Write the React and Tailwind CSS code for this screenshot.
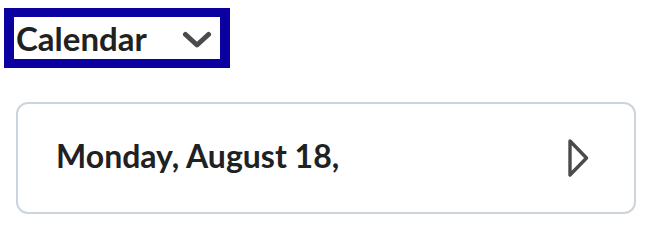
export default function App() {
  return (
    <div className="min-h-[230px] bg-white pl-1 pt-2 font-['Lato',sans-serif]">
      <button
        type="button"
        className="flex w-[226px] h-[60px] items-center justify-between border-x-[10px] border-y-[9px] border-[#0b00a0] bg-white pl-[2px] pr-[8px]"
      >
        <span className="text-[33px] font-bold leading-none text-[#202122]">Calendar</span>
        <svg width="30" height="18" viewBox="0 0 30 18" fill="none" className="mt-[4px]">
          <path
            d="M3.5 3.5 L15 14 L26.5 3.5"
            stroke="#494c4e"
            strokeWidth="5"
            strokeLinecap="round"
            strokeLinejoin="round"
          />
        </svg>
      </button>

      <div className="ml-3 mt-[34px] flex h-[112px] w-[620px] items-center justify-between rounded-xl border-2 border-[#cdd5dc] pl-[38px] pr-[45px]">
        <span className="text-[32px] font-bold leading-none text-[#202122] -mt-[4px]">Monday, August 18,</span>
        <svg width="21" height="38" viewBox="0 0 21 38" fill="none" className="-mt-[1px]">
          <path
            d="M2 2 L18.5 19 L2 36 Z"
            stroke="#494c4e"
            strokeWidth="3.4"
            strokeLinejoin="round"
          />
        </svg>
      </div>
    </div>
  )
}
